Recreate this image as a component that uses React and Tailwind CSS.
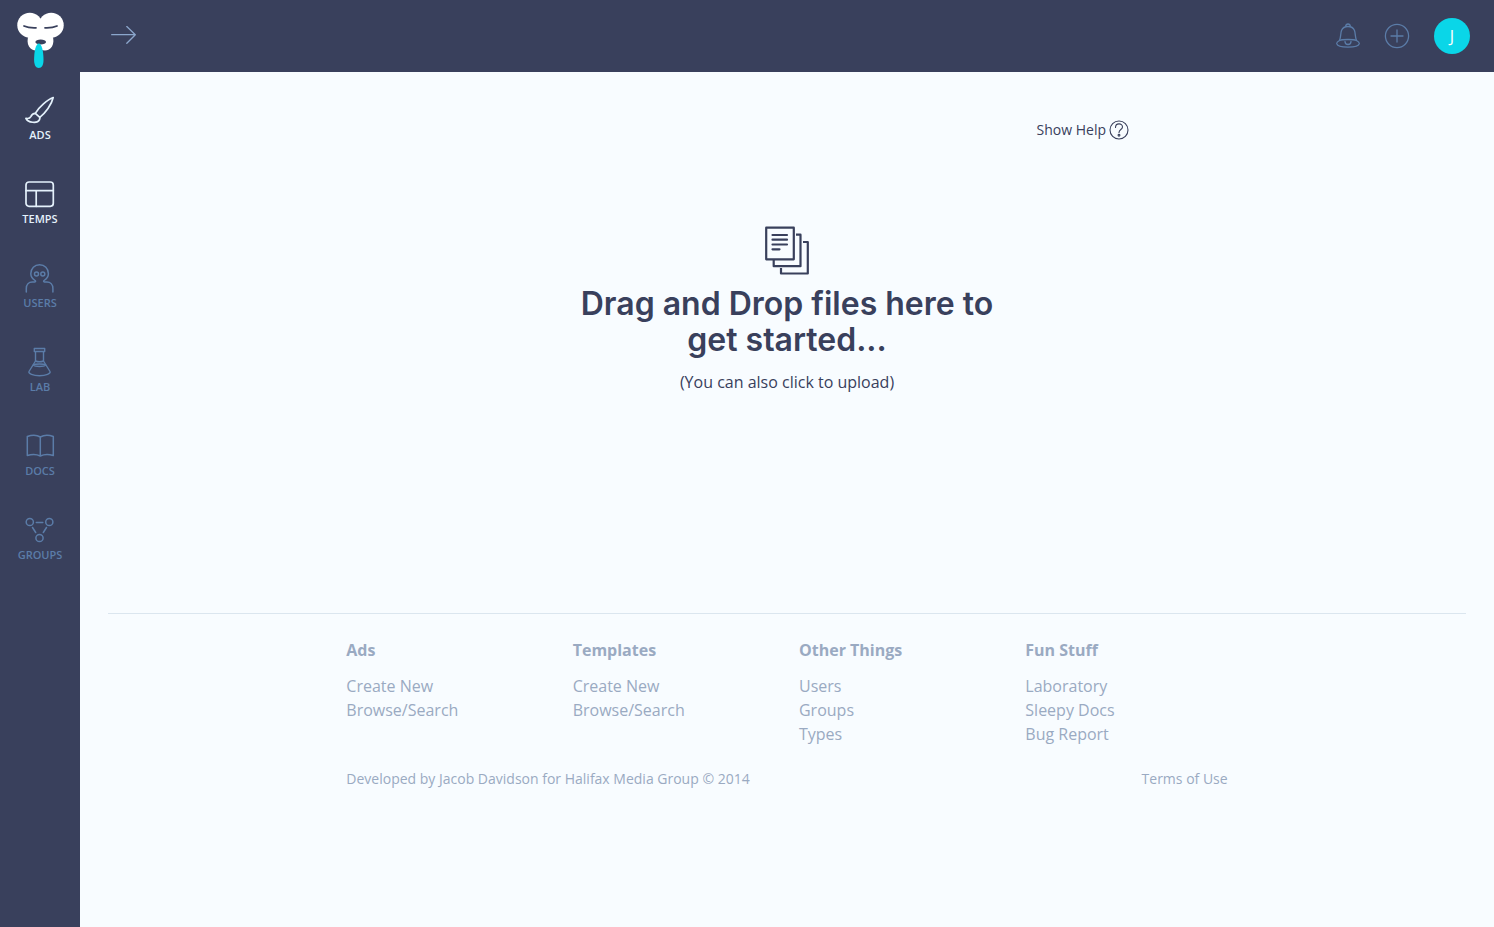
const stroke = { fill: 'none', stroke: 'currentColor', strokeLinecap: 'round', strokeLinejoin: 'round' };

function Logo() {
  return (
    <svg width="48" height="58" viewBox="0 0 48 58" aria-hidden="true">
      <g fill="#fff">
        <circle cx="13.8" cy="13.2" r="12.5" />
        <circle cx="35.2" cy="13.2" r="12.5" />
        <path d="M20 10h9v20h-9zM13 24h23v4H13z" />
        <path d="M12.500 24h24c1.300 3 1.300 7.500-.500 10.500-2.500 4-7 5.200-11.500 3-4.500 2.200-9 1-11.500-3-1.800-3-1.800-7.500-.500-10.500z" />
      </g>
      <path d="M8 14c3.500 1.600 7.500 2 12 1.800M41 14c-3.500 1.600-7.500 2-12 1.800" fill="none" stroke="#39405c" strokeWidth="1.7" strokeLinecap="round" />
      <ellipse cx="24.700" cy="30" rx="5.300" ry="2.500" fill="#39405c" />
      <path d="M22.800 31.500c3 0 4.700 8 4.700 16.500 0 5-1.700 8-4.700 8s-4.700-3-4.700-8c0-8.500 1.700-16.500 4.700-16.500z" fill="#0ad6e8" />
    </svg>
  );
}

function Brush() {
  return (
    <svg width="30" height="30" viewBox="0 0 30 30" strokeWidth="1.7" {...stroke} aria-hidden="true">
      <path d="M28.200 2.500C22.700 4.500 13.700 12 10.300 18.300l4.500 4C20.300 18 26.700 9.500 28.200 2.500z" />
      <path d="M10.300 18.300c-3 0-3.800 1.500-4.500 3.300C5 23.300 3.300 23.800.900 23.300c2 4.500 11.500 5.500 13.500 1.500.500-1 .500-1.800.400-2.500" />
    </svg>
  );
}

function Template() {
  return (
    <svg width="30" height="30" viewBox="0 0 30 30" strokeWidth="1.7" {...stroke} aria-hidden="true">
      <rect x="1" y="3" width="27.300" height="24.300" rx="3" />
      <path d="M1 11.700h27.300M11.200 11.700v15.600" />
    </svg>
  );
}

function User() {
  return (
    <svg width="30" height="30" viewBox="0 0 30 30" strokeWidth="1.500" {...stroke} aria-hidden="true">
      <path d="M1.300 29v-3.500c0-4 2.500-6.500 6-6.500h2.500c1 0 1-.800.300-1.500C7.300 15.500 5.800 13.500 5.800 10.700c0-5.200 3.800-9 8.800-9s8.800 3.800 8.800 9c0 2.800-1.500 4.800-4.300 6.800-.700.700-.700 1.500.300 1.500h2.500c3.500 0 6 2.500 6 6.500V29" />
      <circle cx="11.500" cy="11" r="2" />
      <circle cx="17.800" cy="11" r="2" />
    </svg>
  );
}

function Flask() {
  return (
    <svg width="30" height="30" viewBox="0 0 30 30" strokeWidth="1.400" {...stroke} aria-hidden="true">
      <path d="M9.300 1.500h10.400v3H9.300zM10.500 4.500v9.500L4 24.500c-1 2 4 4.200 10.500 4.200S26 26.500 25 24.500L18.500 14V4.500" />
      <path d="M10.500 14c2.300.900 5.700.900 8 0M8.300 18c2-1.400 10.400-1.400 12.400 0-2 1.900-10.400 1.900-12.400 0z" />
    </svg>
  );
}

function Book() {
  return (
    <svg width="30" height="30" viewBox="0 0 30 30" strokeWidth="1.500" {...stroke} aria-hidden="true">
      <path d="M15.300 6C12 4 6.500 4 2.300 5.500v19c4-1.200 9.500-1.200 13 .500 3.500-1.700 9-1.700 13-.500v-19c-4-1.500-9.500-1.500-13 .500zM15.300 6v19" />
    </svg>
  );
}

function Network() {
  return (
    <svg width="30" height="30" viewBox="0 0 30 30" strokeWidth="1.500" {...stroke} aria-hidden="true">
      <circle cx="4.800" cy="7" r="3.600" />
      <circle cx="24.300" cy="7" r="3.600" />
      <circle cx="14.500" cy="23" r="3.600" />
      <path d="M11.300 7.500h6.500M7.500 12.500l3.200 5M21.500 12.500l-3.200 5" />
    </svg>
  );
}

function Stack() {
  return (
    <svg width="44" height="49" viewBox="0 0 44 49" fill="none" stroke="currentColor" strokeWidth="2.200" strokeLinejoin="round" aria-hidden="true">
      <rect x="1.200" y="1.700" width="27.600" height="31.600" />
      <path d="M31 8.700h4.500v31.500H8.700V34M38 16h4.800v31.500H16V42" />
      <path d="M7.500 9h14.500M7.500 13.700h14.500M7.500 18.500h14.500M7.500 23.300h7" strokeLinecap="round" />
    </svg>
  );
}

const nav = [
  { label: 'ADS', Icon: Brush, active: true },
  { label: 'TEMPS', Icon: Template, active: true },
  { label: 'USERS', Icon: User },
  { label: 'LAB', Icon: Flask },
  { label: 'DOCS', Icon: Book },
  { label: 'GROUPS', Icon: Network },
];

const columns = [
  { title: 'Ads', links: ['Create New', 'Browse/Search'] },
  { title: 'Templates', links: ['Create New', 'Browse/Search'] },
  { title: 'Other Things', links: ['Users', 'Groups', 'Types'] },
  { title: 'Fun Stuff', links: ['Laboratory', 'Sleepy Docs', 'Bug Report'] },
];

export default function App() {
  return (
    <div className="flex min-h-screen bg-[#f8fcff] font-['Open_Sans',sans-serif] text-[#39405c]">
      <aside className="w-20 shrink-0 bg-[#39405c]">
        <a href="#home" aria-label="Home" className="flex h-[83px] justify-center pt-3">
          <Logo />
        </a>
        <nav>
          {nav.map(({ label, Icon, active }) => (
            <a
              key={label}
              href={'#' + label.toLowerCase()}
              className={`flex h-[84px] flex-col items-center gap-0.5 pt-3 text-[11px] leading-4 font-semibold ${active ? 'text-[#e4f1fb]' : 'text-[#5b7ca8]'}`}
            >
              <Icon />
              <span>{label}</span>
            </a>
          ))}
        </nav>
      </aside>

      <div className="flex min-w-0 grow flex-col">
        <header className="flex h-[72px] items-center bg-[#39405c] pr-6 pl-[31px] text-[#5b7ca8]">
          <button type="button" aria-label="Expand menu" className="text-[#8ba6cc]">
            <svg width="25" height="20" viewBox="0 0 25 20" strokeWidth="1.300" {...stroke} aria-hidden="true">
              <path d="M.700 8.700h23.600M15.800.500l8.500 8.200-8.500 8.500" />
            </svg>
          </button>
          <div className="ml-auto flex items-center gap-6">
            <button type="button" aria-label="Notifications">
              <svg width="24" height="26" viewBox="0 0 24 26" strokeWidth="1.300" {...stroke} aria-hidden="true">
                <path d="M9.800 3.500C9.500 2 10.500 1 12 1s2.500 1 2.200 2.500M3.500 17.500C5 14 4.500 10 5.500 7.500 6.500 5 9 3.500 12 3.500s5.500 1.500 6.500 4c1 2.500.500 6.500 2 10" />
                <path d="M12 16.500c3.500 0 7 .300 8.500 1 2 1 3 2 2.800 3.200-.500 2.500-5.300 3.500-11.300 3.500S1.200 23.200.700 20.700C.500 19.500 1.500 18.500 3.500 17.500c1.500-.700 5-1 8.500-1z" />
                <path d="M9 18.500c0 4 6 4 6 0" />
              </svg>
            </button>
            <button type="button" aria-label="Add">
              <svg width="26" height="26" viewBox="0 0 26 26" strokeWidth="1.300" {...stroke} aria-hidden="true">
                <circle cx="13" cy="13" r="11.600" />
                <path d="M7 13h12M13 7v12" />
              </svg>
            </button>
            <button type="button" aria-label="Account" className="size-9 rounded-full bg-[#0ad6e8] text-base text-white">
              J
            </button>
          </div>
        </header>

        <main className="px-7">
          <div className="mx-auto flex max-w-[684px] justify-end pt-12">
            <button type="button" className="flex items-center gap-[3px] text-sm leading-5">
              Show Help
              <svg width="20" height="20" viewBox="0 0 20 20" strokeWidth="1.100" {...stroke} aria-hidden="true">
                <circle cx="10" cy="10" r="9" />
                <path d="M6.500 7.500c0-4.700 7-4.700 7-.500 0 2.600-3.500 2.500-3.500 5.500" />
                <circle cx="10" cy="15.200" r=".900" />
              </svg>
            </button>
          </div>
          <button type="button" className="mx-auto flex h-[473px] w-full max-w-[453px] flex-col items-center pt-[86px]">
            <Stack />
            <span className="mt-[11px] font-['Inter',sans-serif] text-[32px] leading-9 font-semibold">
              Drag and Drop files here to get started...
            </span>
            <span className="mt-3 text-base leading-6">(You can also click to upload)</span>
          </button>
        </main>

        <footer className="mx-7 border-t border-[#dbe6ef] pt-6 text-[#9aaac2]">
          <div className="mx-auto w-2/3">
            <div className="grid grid-cols-4">
              {columns.map(({ title, links }) => (
                <section key={title} className="px-3">
                  <h2 className="text-base leading-6 font-bold">{title}</h2>
                  <ul className="mt-3 text-base leading-6">
                    {links.map((link) => (
                      <li key={link}>
                        <a href="#link">{link}</a>
                      </li>
                    ))}
                  </ul>
                </section>
              ))}
            </div>
            <div className="mt-[23px] flex justify-between px-3 text-sm leading-5">
              <p>Developed by Jacob Davidson for Halifax Media Group © 2014</p>
              <a href="#terms">Terms of Use</a>
            </div>
          </div>
        </footer>
      </div>
    </div>
  );
}
